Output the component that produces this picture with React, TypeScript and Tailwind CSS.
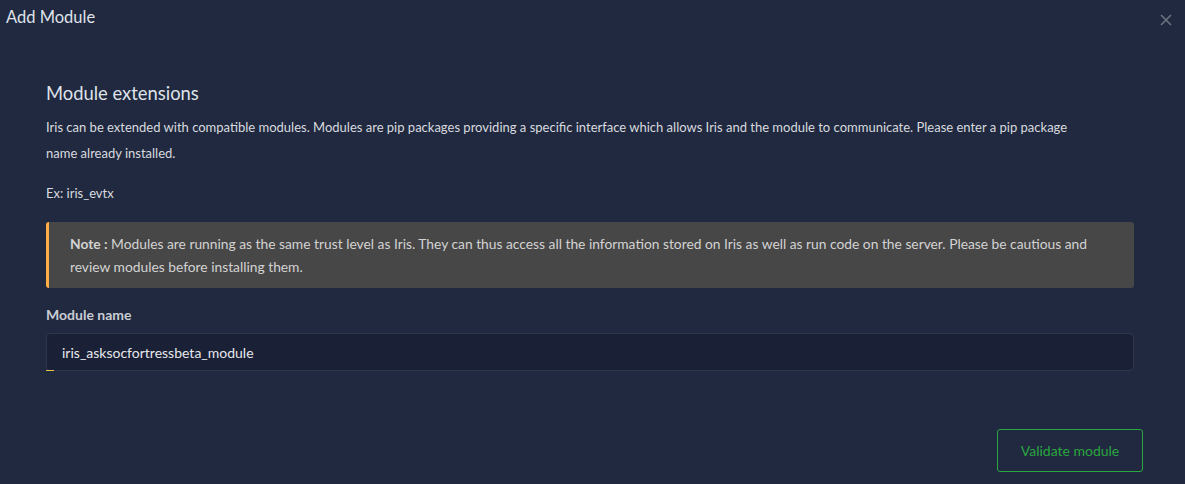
import React from 'react';

const App: React.FC = () => {
  return (
    <div className="w-[1185px] h-[484px] bg-[#202940] text-[#d8dadf] overflow-hidden" style={{ fontFamily: 'Lato, "Open Sans", sans-serif' }}>
      {/* Header */}
      <div className="flex items-start justify-between pl-[6px] pr-[13px] pt-[5px]">
        <h2 className="text-[16.5px] leading-[24px] text-[#dfe2e8]">Add Module</h2>
        <button className="mt-[9px] text-[#6b7280]">
          <svg width="12" height="12" viewBox="0 0 12 12" fill="none" stroke="currentColor" strokeWidth="1.6">
            <path d="M1 1L11 11M11 1L1 11" />
          </svg>
        </button>
      </div>

      {/* Body */}
      <div className="pl-[46px] pr-[51px] pt-[51px]">
        <h3 className="text-[18.4px] leading-[26px] text-[#dfe2e8]">Module extensions</h3>
        <p className="mt-[8px] pr-[40px] text-[13px] leading-[26px]">
          Iris can be extended with compatible modules. Modules are pip packages providing a specific interface which allows Iris and the module to communicate. Please enter a pip package name already installed.
        </p>
        <p className="mt-[14px] text-[13px] leading-[26px]">Ex: iris_evtx</p>

        <div className="mt-[16px] bg-[#474747] border-l-[3px] border-[#ffad46] rounded-[3px] pl-[21px] pr-[20px] py-[10px] text-[13.8px] leading-[23px] text-[#d3d3d3]">
          <b>Note :</b> Modules are running as the same trust level as Iris. They can thus access all the information stored on Iris as well as run code on the server. Please be cautious and review modules before installing them.
        </div>

        <label className="block mt-[17px] text-[14px] leading-[20px] font-bold text-[#c9ccd3]">Module name</label>
        <div className="relative mt-[8px]">
          <input
            className="w-full h-[38px] bg-[#1a2035] border border-[#2f374b] rounded-[4px] px-[15px] text-[14px] text-[#e6e8ec] outline-none"
            style={{ fontFamily: 'Lato, "Open Sans", sans-serif' }}
            defaultValue="iris_asksocfortressbeta_module"
          />
          <div className="absolute left-0 top-[37px] w-[8px] h-[1px] bg-[#e5c34a]" />
        </div>

        <div className="flex justify-end mt-[58px] mr-[-9px]">
          <button className="w-[146px] h-[43px] border border-[#2aa63e] rounded-[3px] text-[14px] text-[#2aa63e]">
            Validate module
          </button>
        </div>
      </div>
    </div>
  );
};

export default App;
